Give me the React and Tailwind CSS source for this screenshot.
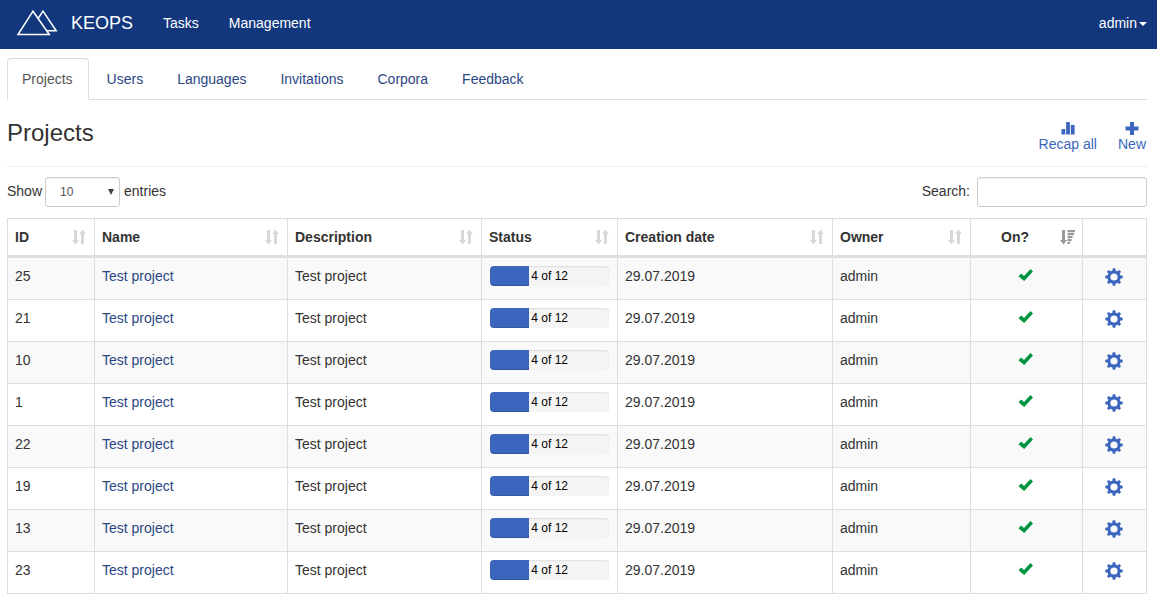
import React from "react";

const TABS = ["Users", "Languages", "Invitations", "Corpora", "Feedback"];
const PROJECT_IDS = [25, 21, 10, 1, 22, 19, 13, 23];
const COLUMNS = [
  { label: "ID", width: "w-[87px]" },
  { label: "Name", width: "w-[193px]" },
  { label: "Description", width: "w-[194px]" },
  { label: "Status", width: "w-[136px]" },
  { label: "Creation date", width: "w-[215px]" },
  { label: "Owner", width: "w-[138px]" },
];

function Logo() {
  return (
    <svg width="42" height="28" viewBox="0 0 42 28" fill="none" stroke="#fff" strokeWidth="1.5" aria-hidden="true">
      <path d="M17 2.2 L2 25.5 H33.3 Z" />
      <path d="M22.5 9 L27 2.2 L40.2 21.8 H31" />
    </svg>
  );
}

function SortIcon() {
  return (
    <svg className="shrink-0" width="14" height="16" viewBox="0 0 14 16" fill="#d8d8d8" aria-hidden="true">
      <path d="M2 1h3v10h2l-3.500 4.500L0 11h2z" />
      <path d="M9 15V5H7l3.500-4.500L14 5h-2v10z" />
    </svg>
  );
}

function SortedIcon() {
  return (
    <svg className="shrink-0" width="15" height="16" viewBox="0 0 15 16" fill="#999" aria-hidden="true">
      <path d="M2 1h3v10h2l-3.500 4.500L0 11h2z" />
      <path d="M7.500 1H15v2.300H7.500zM7.500 4H14v2.300H7.500zM7.500 7h5v2.300h-5zM7.500 10h4v2.300h-4zM7.500 13h2.500v2H7.500z" />
    </svg>
  );
}

function StatsIcon() {
  return (
    <svg width="14" height="14" viewBox="0 0 14 14" fill="#3c66bd" aria-hidden="true">
      <rect x="0.500" y="8" width="3.800" height="5.500" rx="0.500" />
      <rect x="5.100" y="1" width="3.800" height="12.500" rx="0.500" />
      <rect x="9.800" y="4" width="3.800" height="9.500" rx="0.500" />
    </svg>
  );
}

function PlusIcon() {
  return (
    <svg width="14" height="14" viewBox="0 0 14 14" fill="#3c66bd" aria-hidden="true">
      <path d="M5 1h4v4.500h4.500v4H9V14H5V9.500H0.500v-4H5z" />
    </svg>
  );
}

function CheckIcon() {
  return (
    <svg width="16" height="16" viewBox="0 0 16 16" fill="#009440" role="img" aria-label="Yes">
      <path d="M0.500 9.200 3.200 6.500 6 9 12.500 2 15 4.600 6.200 14z" />
    </svg>
  );
}

function CogIcon() {
  const angles = [0, 45, 90, 135, 180, 225, 270, 315];
  return (
    <svg width="18" height="18" viewBox="0 0 18 18" aria-hidden="true">
      <circle cx="9" cy="9" r="5.100" fill="none" stroke="#3c66bd" strokeWidth="3" />
      {angles.map((a) => (
        <path key={a} d="M7.200 3 7.800 0.300h2.400L10.800 3z" fill="#3c66bd" transform={`rotate(${a} 9 9)`} />
      ))}
    </svg>
  );
}

function Progress({ done, total }) {
  return (
    <div
      role="progressbar"
      aria-label="Tasks done"
      aria-valuenow={done}
      aria-valuemax={total}
      className="flex h-5 overflow-hidden rounded bg-[#f5f5f5] shadow-[inset_0_1px_2px_rgba(0,0,0,0.1)]"
    >
      <div
        className="shrink-0 bg-[#3c66bd] shadow-[inset_0_-1px_0_rgba(0,0,0,0.15)]"
        style={{ width: `${Math.floor((done / total) * 100)}%` }}
      />
      <span className="ml-[2px] text-xs leading-5 text-black">
        {done} of {total}
      </span>
    </div>
  );
}

export default function App() {
  return (
    <div className="bg-white font-['Liberation_Sans',Arial,sans-serif] text-sm leading-5 text-[#333]">
      <nav className="flex h-[49px] items-center bg-[#12377d] pr-[10px] pb-[3px] pl-4 text-white">
        <a href="#home" className="flex items-center gap-[13px] text-lg">
          <Logo />
          <span>KEOPS</span>
        </a>
        <a href="#tasks" className="ml-[30px]">Tasks</a>
        <a href="#management" className="ml-[30px]">Management</a>
        <button type="button" className="ml-auto flex items-center gap-[2px]">
          admin
          <svg className="mt-[2px]" width="8" height="4" viewBox="0 0 8 4" fill="#fff" aria-hidden="true">
            <path d="M0 0h8L4 4z" />
          </svg>
        </button>
      </nav>

      <main className="pt-[9px] pr-[10px] pl-[7px]">
        <div className="flex gap-[2px] border-b border-[#ddd]">
          <a
            href="#projects"
            aria-current="page"
            className="-mb-px rounded-t border border-[#ddd] border-b-white bg-white py-[10px] pr-[15px] pl-[14px] text-[#555]"
          >
            Projects
          </a>
          {TABS.map((t) => (
            <a key={t} href={`#${t.toLowerCase()}`} className="-mb-px border border-transparent px-[15px] py-[10px] text-[#2a4784]">
              {t}
            </a>
          ))}
        </div>

        <header className="flex items-end justify-between border-b border-[#eee] pb-3">
          <h1 className="pt-5 pb-2 text-2xl leading-[26px]">Projects</h1>
          <div className="flex gap-[21px] pr-px pb-px text-[#3c66bd]">
            <a href="#recap" className="flex flex-col items-center leading-[18px]">
              <StatsIcon />
              Recap all
            </a>
            <a href="#new" className="flex flex-col items-center leading-[18px]">
              <PlusIcon />
              New
            </a>
          </div>
        </header>

        <div className="flex justify-between py-[10px]">
          <label className="flex gap-1">
            <span className="-mr-px pt-1">Show</span>
            <span className="relative">
              <select
                defaultValue="10"
                className="block h-[30px] w-[75px] appearance-none rounded-[3px] border border-[#ccc] bg-white pr-6 pl-[14px] text-xs text-[#555] shadow-[inset_0_1px_1px_rgba(0,0,0,0.075)]"
              >
                <option>10</option>
                <option>25</option>
                <option>50</option>
                <option>100</option>
              </select>
              <svg className="pointer-events-none absolute top-3 right-[6px]" width="6" height="6" viewBox="0 0 6 6" fill="#444" aria-hidden="true">
                <path d="M0 0h6L3 6z" />
              </svg>
            </span>
            <span className="pt-1">entries</span>
          </label>
          <label className="flex gap-[7px]">
            <span className="pt-1">Search:</span>
            <input
              type="search"
              className="h-[30px] w-[170px] rounded-[3px] border border-[#ccc] bg-white px-[10px] text-xs shadow-[inset_0_1px_1px_rgba(0,0,0,0.075)]"
            />
          </label>
        </div>

        <table className="mt-px w-full table-fixed border-collapse border border-[#ddd]">
          <thead>
            <tr>
              {COLUMNS.map((c) => (
                <th key={c.label} className={`${c.width} border border-b-3 border-[#ddd] pt-2 pr-2 pb-2 pl-[7px] text-left`}>
                  <div className="flex items-center justify-between">
                    {c.label}
                    <SortIcon />
                  </div>
                </th>
              ))}
              <th className="w-[112px] border border-b-3 border-[#ddd] pt-2 pr-[7px] pb-2 pl-[30px] text-left">
                <div className="flex items-center justify-between">
                  On?
                  <SortedIcon />
                </div>
              </th>
              <th className="w-[64px] border border-b-3 border-[#ddd]" aria-label="Settings" />
            </tr>
          </thead>
          <tbody className="align-top">
            {PROJECT_IDS.map((id) => (
              <tr key={id} className="h-[42px] first:h-[43px] odd:bg-[#f9f9f9]">
                <td className="border border-[#ddd] pt-2 pr-2 pl-[7px]">{id}</td>
                <td className="border border-[#ddd] pt-2 pr-2 pl-[7px]">
                  <a href={`#project-${id}`} className="text-[#2a4784]">Test project</a>
                </td>
                <td className="border border-[#ddd] pt-2 pr-2 pl-[7px]">Test project</td>
                <td className="border border-[#ddd] px-2 pt-2">
                  <Progress done={4} total={12} />
                </td>
                <td className="border border-[#ddd] pt-2 pr-2 pl-[7px]">29.07.2019</td>
                <td className="border border-[#ddd] pt-2 pr-2 pl-[7px]">admin</td>
                <td className="border border-[#ddd] pt-2 pr-2 pl-[7px]">
                  <div className="flex justify-center pt-px">
                    <CheckIcon />
                  </div>
                </td>
                <td className="border border-[#ddd] pt-2 pr-2 pl-[7px]">
                  <a href={`#settings-${id}`} aria-label="Project settings" className="flex justify-center pt-[2px]">
                    <CogIcon />
                  </a>
                </td>
              </tr>
            ))}
          </tbody>
        </table>
      </main>
    </div>
  );
}
